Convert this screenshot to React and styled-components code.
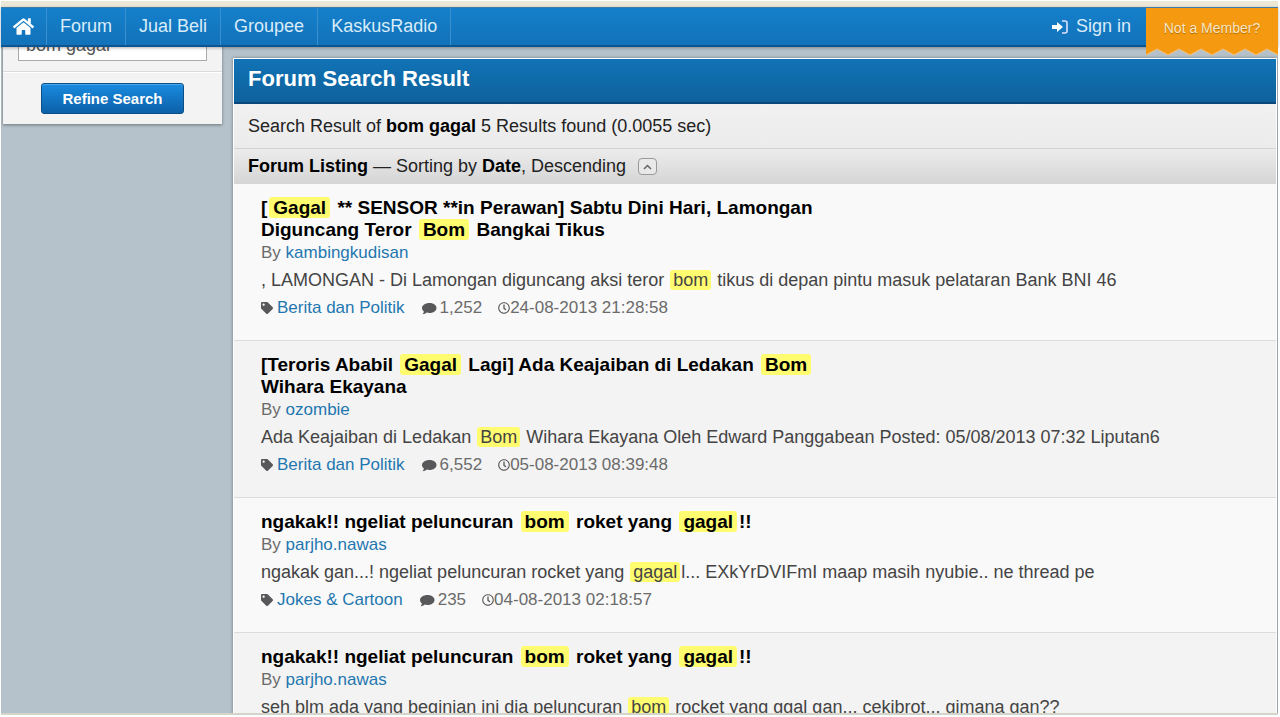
import styled, { createGlobalStyle } from "styled-components"
import { FaTag, FaRegClock, FaHome } from "react-icons/fa"

const colors = {
  page: "#b5c2cb",
  link: "#1f77b0",
  muted: "#6b6b6b",
  icon: "#58585a",
  text: "#222",
  mark: "#fffc70",
}

const navItems = ["Forum", "Jual Beli", "Groupee", "KaskusRadio"]

const threads = [
  {
    id: 1,
    title: ["[", { hit: "Gagal" }, " ** SENSOR **in Perawan] Sabtu Dini Hari, Lamongan Diguncang Teror ", { hit: "Bom" }, " Bangkai Tikus"],
    author: "kambingkudisan",
    excerpt: [", LAMONGAN - Di Lamongan diguncang aksi teror ", { hit: "bom" }, " tikus di depan pintu masuk pelataran Bank BNI 46"],
    forum: "Berita dan Politik",
    replies: "1,252",
    date: "24-08-2013 21:28:58",
  },
  {
    id: 2,
    title: ["[Teroris Ababil ", { hit: "Gagal" }, " Lagi] Ada Keajaiban di Ledakan ", { hit: "Bom" }, " Wihara Ekayana"],
    author: "ozombie",
    excerpt: ["Ada Keajaiban di Ledakan ", { hit: "Bom" }, " Wihara Ekayana Oleh Edward Panggabean Posted: 05/08/2013 07:32 Liputan6"],
    forum: "Berita dan Politik",
    replies: "6,552",
    date: "05-08-2013 08:39:48",
  },
  {
    id: 3,
    title: ["ngakak!! ngeliat peluncuran ", { hit: "bom" }, " roket yang ", { hit: "gagal" }, "!!"],
    author: "parjho.nawas",
    excerpt: ["ngakak gan...! ngeliat peluncuran rocket yang ", { hit: "gagal" }, "l... EXkYrDVIFmI maap masih nyubie.. ne thread pe"],
    forum: "Jokes & Cartoon",
    replies: "235",
    date: "04-08-2013 02:18:57",
  },
  {
    id: 4,
    title: ["ngakak!! ngeliat peluncuran ", { hit: "bom" }, " roket yang ", { hit: "gagal" }, "!!"],
    author: "parjho.nawas",
    excerpt: ["seh blm ada yang beginian ini dia peluncuran ", { hit: "bom" }, " rocket yang ggal gan... cekibrot... gimana gan??"],
    forum: "Jokes & Cartoon",
    replies: "235",
    date: "04-08-2013 02:18:57",
  },
]

const Highlighted = ({ parts }) =>
  parts.map((part, i) => (part.hit ? <Mark key={i}>{part.hit}</Mark> : part))

const CommentIcon = () => (
  <svg width="16" height="13" viewBox="0 0 16 13" aria-hidden="true">
    <path d="M8.5 1C12.600 1 15.500 3.200 15.500 6S12.600 11 8.500 11C7.500 11 6.600 10.900 5.800 10.600C4.700 11.700 3.200 12.300 1.500 12.300C2.300 11.500 2.800 10.600 2.900 9.500C1.800 8.600 1 7.400 1 6C1 3.200 4.400 1 8.500 1Z" fill="currentColor" />
  </svg>
)

const Thread = ({ thread }) => (
  <ThreadItem>
    <ThreadTitle><Highlighted parts={thread.title} /></ThreadTitle>
    <Byline>By <Link href="#">{thread.author}</Link></Byline>
    <Excerpt><Highlighted parts={thread.excerpt} /></Excerpt>
    <Meta>
      <MetaItem $gap={4}><FaTag size={12} /><Link href="#">{thread.forum}</Link></MetaItem>
      <MetaItem $gap={3}><CommentIcon />{thread.replies}</MetaItem>
      <MetaItem $gap={0}><FaRegClock size={12} />{thread.date}</MetaItem>
    </Meta>
  </ThreadItem>
)

const SignInIcon = () => (
  <svg width="16" height="14" viewBox="0 0 16 14" aria-hidden="true">
    <path d="M0 5h5V2l6 5-6 5V9H0z" fill="#fff" />
    <path d="M10 1h3a2 2 0 0 1 2 2v8a2 2 0 0 1-2 2h-3" fill="none" stroke="#dfe0fb" strokeWidth="1.6" />
  </svg>
)

const App = () => {
  return (
    <Window>
      <GlobalStyle />
      <TopStrip />
      <NavBar>
        <HomeLink href="#" aria-label="Home"><FaHome size={21} /></HomeLink>
        {navItems.map((item) => <NavLink href="#" key={item}>{item}</NavLink>)}
        <SignIn href="#"><SignInIcon />Sign in</SignIn>
        <Ribbon href="#">
          <span>Not a Member?</span>
          <svg viewBox="0 0 132 8" preserveAspectRatio="none" aria-hidden="true">
            <path d="M0 0H132V7L121 1L110 7L99 1L88 7L77 1L66 7L55 1L44 7L33 1L22 7L11 1L0 7Z" fill="#f59a10" />
            <path d="M0 7L11 1L22 7L33 1L44 7L55 1L66 7L77 1L88 7L99 1L110 7L121 1L132 7" fill="none" stroke="#f3c27c" />
          </svg>
        </Ribbon>
      </NavBar>
      <Content>
        <Sidebar>
          <SearchField><input aria-label="Keyword" defaultValue="bom gagal" /></SearchField>
          <SidebarFooter><RefineButton type="button">Refine Search</RefineButton></SidebarFooter>
        </Sidebar>
        <Results>
          <ResultsHeader>Forum Search Result</ResultsHeader>
          <Summary>Search Result of <b>bom gagal</b> 5 Results found (0.0055 sec)</Summary>
          <ListHeader>
            <span><b>Forum Listing</b> — Sorting by <b>Date</b>, Descending</span>
            <SortButton type="button" aria-label="Sort ascending">
              <svg width="9" height="6" viewBox="0 0 9 6"><path d="M1 5l3.5-3.5L8 5" fill="none" stroke="#666" strokeWidth="1.5" /></svg>
            </SortButton>
          </ListHeader>
          <ThreadList>
            {threads.map((thread) => <Thread key={thread.id} thread={thread} />)}
          </ThreadList>
        </Results>
      </Content>
    </Window>
  )
}

export default App

const GlobalStyle = createGlobalStyle`
  * {
    box-sizing: border-box;
  }
  body {
    margin: 0;
    font-family: "Liberation Sans", Arial, sans-serif;
    font-size: 18px;
    color: ${colors.text};
    background: #fff;
  }
  a {
    text-decoration: none;
  }
`

const Window = styled.div`
  display: flex;
  flex-direction: column;
  height: 100vh;
  padding: 1px 2px 2px 1px;
  overflow: hidden;
`

const TopStrip = styled.div`
  flex: none;
  height: 6px;
  background: #ebe8d8;
`

const NavBar = styled.nav`
  position: relative;
  z-index: 2;
  flex: none;
  display: flex;
  height: 40px;
  border-top: 1px solid #3f7ba8;
  border-bottom: 2px solid #0c5590;
  background: linear-gradient(#1580cc, #1272b9);
  box-shadow: 0 1px 3px rgba(0, 0, 0, 0.3);
`

const NavLink = styled.a`
  display: flex;
  align-items: center;
  padding: 0 13px;
  border-right: 1px solid #3a8fcf;
  color: #d9ecf8;
`

const HomeLink = styled(NavLink)`
  padding: 0 12px;
  color: #fff;
`

const SignIn = styled(NavLink)`
  gap: 8px;
  margin-left: auto;
  padding: 0 15px;
  border: 0;
`

const Ribbon = styled.a`
  align-self: flex-start;
  width: 132px;
  color: #fbe6c4;
  font-size: 14px;
  line-height: 40px;
  text-align: center;
  text-shadow: 0 1px 1px #b06a00;
  span {
    display: block;
    background: #f59a10;
  }
  svg {
    display: block;
    width: 100%;
    height: 8px;
  }
`

const Content = styled.div`
  flex: 1;
  min-height: 0;
  display: flex;
  align-items: flex-start;
  gap: 11px;
  padding: 0 1px 0 2px;
  overflow: hidden;
  border-bottom: 2px solid #d3d5c8;
  background: ${colors.page};
`

/* scrolled up under the nav bar */
const Sidebar = styled.aside`
  flex: none;
  width: 219px;
  margin-top: -25px;
  background: #f3f3f3;
  box-shadow: 0 1px 3px rgba(0, 0, 0, 0.4);
`

const SearchField = styled.div`
  padding: 8px 15px 10px;
  border-bottom: 1px solid #dadada;
  input {
    display: block;
    width: 100%;
    height: 31px;
    padding: 0 7px;
    border: 1px solid #aaa;
    background: #fff;
    color: #555;
    font: inherit;
  }
`

const SidebarFooter = styled.div`
  display: flex;
  justify-content: center;
  padding: 10px 0;
  border-top: 1px solid #fff;
`

const RefineButton = styled.button`
  height: 31px;
  padding: 0 20px;
  border: 1px solid #0b4f88;
  border-radius: 3px;
  background: linear-gradient(#1a8be0, #0c60a8);
  box-shadow: inset 0 1px 0 #4aa6e8;
  color: #fff;
  font: bold 15px "Liberation Sans", Arial, sans-serif;
`

const Results = styled.main`
  flex: 1;
  min-width: 0;
  margin-top: 11px;
  border: 1px solid #fff;
  background: #f9f9f9;
  box-shadow: 0 0 3px rgba(0, 0, 0, 0.4);
`

const ResultsHeader = styled.h1`
  height: 45px;
  margin: 0;
  padding: 0 14px;
  border-bottom: 2px solid #0a4679;
  background: linear-gradient(#1173b6, #0e619b);
  color: #fff;
  font-size: 22px;
  line-height: 40px;
`

const Summary = styled.div`
  padding: 0 14px;
  border-bottom: 1px solid #d4d4d4;
  background: linear-gradient(#f1f1f1, #ebebeb);
  line-height: 44px;
  b {
    color: #000;
  }
`

const ListHeader = styled.div`
  display: flex;
  align-items: center;
  gap: 12px;
  padding: 0 14px;
  background: linear-gradient(#ececec, #d5d5d5);
  line-height: 35px;
  b {
    color: #000;
  }
`

const SortButton = styled.button`
  display: flex;
  align-items: center;
  justify-content: center;
  width: 19px;
  height: 17px;
  padding: 0;
  border: 1px solid #999;
  border-radius: 4px;
  background: #e9e9e9;
`

const ThreadList = styled.ul`
  margin: 0;
  padding: 0;
  list-style: none;
`

const ThreadItem = styled.li`
  padding: 13px 27px 21px;
  border-bottom: 1px solid #dcdcdc;
  line-height: 22px;
  &:nth-child(even) {
    background: #f3f3f3;
  }
`

const Mark = styled.mark`
  margin: 0 1px;
  padding: 0 3px;
  border-radius: 3px;
  background: ${colors.mark};
  color: inherit;
`

const ThreadTitle = styled.h2`
  max-width: 570px;
  margin: 0 0 1px;
  color: #000;
  font-size: 19px;
  line-height: 22px;
  ${Mark} {
    margin: 0 2px;
    padding: 0 4px;
  }
`

const Byline = styled.div`
  color: ${colors.muted};
  font-size: 17px;
`

const Excerpt = styled.p`
  margin: 5px 0 6px;
  color: #444;
`

const Meta = styled.div`
  display: flex;
  gap: 16px;
  color: ${colors.muted};
  font-size: 17px;
  svg {
    color: ${colors.icon};
  }
`

const MetaItem = styled.span`
  display: flex;
  align-items: center;
  gap: ${(props) => props.$gap}px;
`

const Link = styled.a`
  color: ${colors.link};
`
